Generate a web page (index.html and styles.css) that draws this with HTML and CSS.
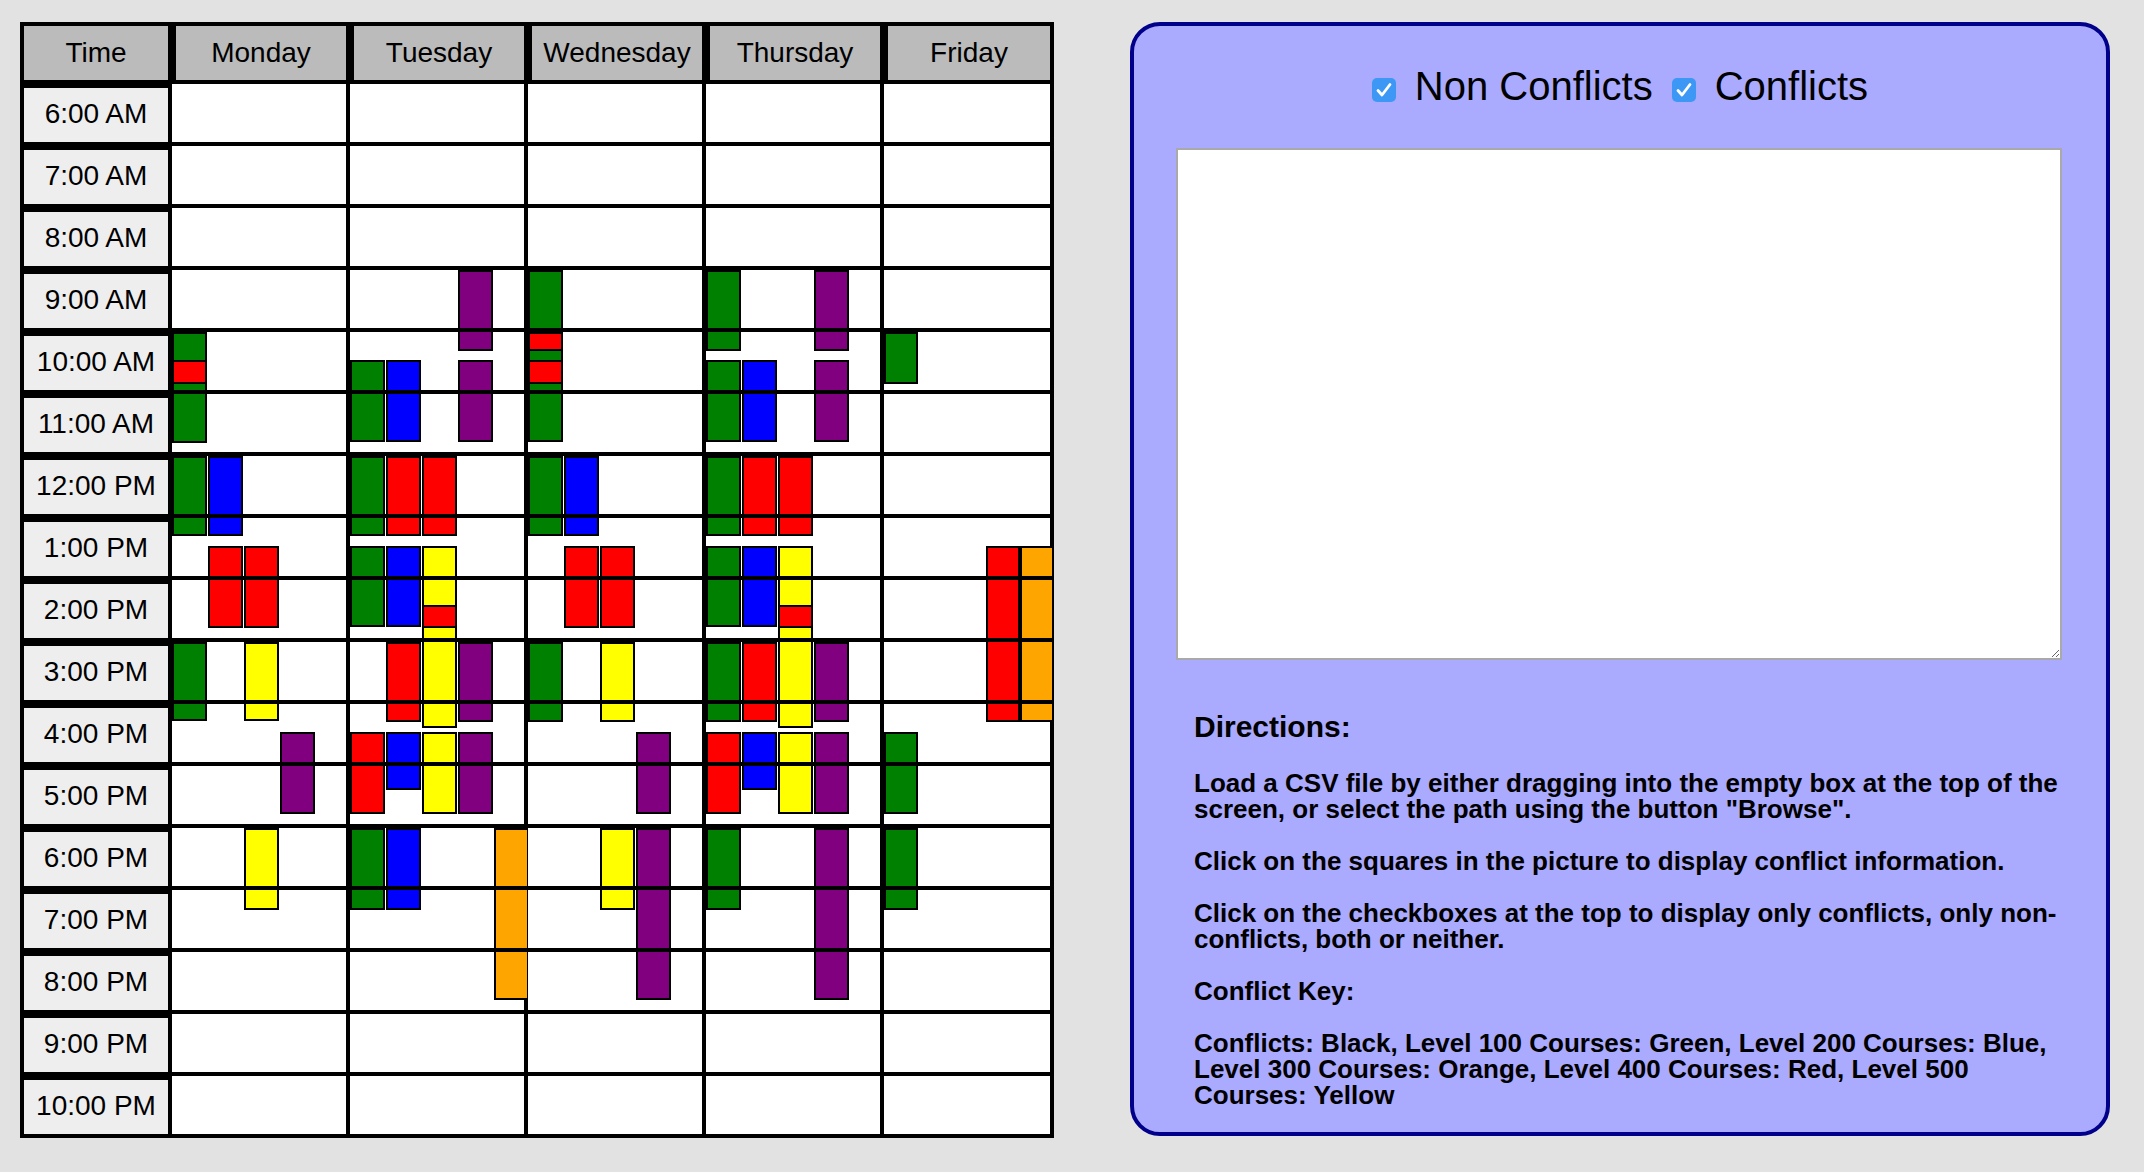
FILE: index.html
```html
<!DOCTYPE html>
<html lang="en">
<head>
<meta charset="utf-8">
<title>Schedule Conflicts</title>
<link rel="stylesheet" href="styles.css">
</head>
<body>
<main class="app">
  <div class="schedule">
    <div class="hd">Time</div>
    <div class="hd hd-day">Monday</div>
    <div class="hd hd-day">Tuesday</div>
    <div class="hd hd-day">Wednesday</div>
    <div class="hd hd-day">Thursday</div>
    <div class="hd hd-day">Friday</div>

    <div class="time">6:00 AM</div><div class="day"></div><div class="day"></div><div class="day"></div><div class="day"></div><div class="day"></div>
    <div class="time">7:00 AM</div><div class="day"></div><div class="day"></div><div class="day"></div><div class="day"></div><div class="day"></div>
    <div class="time">8:00 AM</div><div class="day"></div><div class="day"></div><div class="day"></div><div class="day"></div><div class="day"></div>
    <div class="time">9:00 AM</div><div class="day"></div><div class="day"></div><div class="day"></div><div class="day"></div><div class="day"></div>
    <div class="time">10:00 AM</div><div class="day"></div><div class="day"></div><div class="day"></div><div class="day"></div><div class="day"></div>
    <div class="time">11:00 AM</div><div class="day"></div><div class="day"></div><div class="day"></div><div class="day"></div><div class="day"></div>
    <div class="time">12:00 PM</div><div class="day"></div><div class="day"></div><div class="day"></div><div class="day"></div><div class="day"></div>
    <div class="time">1:00 PM</div><div class="day"></div><div class="day"></div><div class="day"></div><div class="day"></div><div class="day"></div>
    <div class="time">2:00 PM</div><div class="day"></div><div class="day"></div><div class="day"></div><div class="day"></div><div class="day"></div>
    <div class="time">3:00 PM</div><div class="day"></div><div class="day"></div><div class="day"></div><div class="day"></div><div class="day"></div>
    <div class="time">4:00 PM</div><div class="day"></div><div class="day"></div><div class="day"></div><div class="day"></div><div class="day"></div>
    <div class="time">5:00 PM</div><div class="day"></div><div class="day"></div><div class="day"></div><div class="day"></div><div class="day"></div>
    <div class="time">6:00 PM</div><div class="day"></div><div class="day"></div><div class="day"></div><div class="day"></div><div class="day"></div>
    <div class="time">7:00 PM</div><div class="day"></div><div class="day"></div><div class="day"></div><div class="day"></div><div class="day"></div>
    <div class="time">8:00 PM</div><div class="day"></div><div class="day"></div><div class="day"></div><div class="day"></div><div class="day"></div>
    <div class="time">9:00 PM</div><div class="day"></div><div class="day"></div><div class="day"></div><div class="day"></div><div class="day"></div>
    <div class="time">10:00 PM</div><div class="day"></div><div class="day"></div><div class="day"></div><div class="day"></div><div class="day"></div>
  </div>

  <section class="panel">
    <div class="toggles">
      <label class="toggle">
        <span class="check"><svg viewBox="0 0 24 24" width="24" height="24"><path d="M6 12.5 L10 17 L18 6.5" fill="none" stroke="#fff" stroke-width="2.8" stroke-linecap="round" stroke-linejoin="round"/></svg></span>
        <span>Non Conflicts</span>
      </label>
      <label class="toggle">
        <span class="check"><svg viewBox="0 0 24 24" width="24" height="24"><path d="M6 12.5 L10 17 L18 6.5" fill="none" stroke="#fff" stroke-width="2.8" stroke-linecap="round" stroke-linejoin="round"/></svg></span>
        <span>Conflicts</span>
      </label>
    </div>
    <textarea class="drop"></textarea>
    <div class="directions">
      <h3>Directions:</h3>
      <p>Load a CSV file by either dragging into the empty box at the top of the screen, or select the path using the button "Browse".</p>
      <p>Click on the squares in the picture to display conflict information.</p>
      <p>Click on the checkboxes at the top to display only conflicts, only non-conflicts, both or neither.</p>
      <p>Conflict Key:</p>
      <p>Conflicts: Black, Level 100 Courses: Green, Level 200 Courses: Blue, Level 300 Courses: Orange, Level 400 Courses: Red, Level 500 Courses: Yellow</p>
    </div>
  </section>
</main>
<script src="script.js"></script>
</body>
</html>
```

FILE: styles.css
```css
* { box-sizing: border-box; }

body {
  margin: 0;
  background: #e2e2e2;
  font-family: "Liberation Sans", Arial, Helvetica, sans-serif;
  color: #000;
}

.app {
  display: flex;
  align-items: flex-start;
  gap: 76px;
  padding: 22px 0 0 20px;
}

/* ---------- schedule grid ---------- */
.schedule {
  display: grid;
  grid-template-columns: 144px repeat(4, 174px) 166px;
  grid-template-rows: 54px repeat(17, 58px);
  gap: 4px;
  padding: 4px;
  width: 1034px;
  background: #000;
}

.hd {
  background: #bbbbbb;
  font-size: 28px;
  line-height: 53px;
  text-align: center;
  white-space: nowrap;
}

.hd-day { border-left: 4px solid #000; }

.time {
  background: #eeeeee;
  border-top: 4px solid #000;
  font-size: 28px;
  line-height: 52px;
  text-align: center;
  white-space: nowrap;
}

.day {
  position: relative;
  background: #fff;
}

.ev {
  position: absolute;
  border: 2px solid #000;
}
.ev.cont-top { border-top: 0; }
.ev.cont-bot { border-bottom: 0; }

.ev-g { background: #008000; }
.ev-r { background: #ff0000; }
.ev-b { background: #0000ff; }
.ev-y { background: #ffff00; }
.ev-p { background: #800080; }
.ev-o { background: #ffa500; }

/* ---------- side panel ---------- */
.panel {
  width: 980px;
  border: 4px solid #00008b;
  border-radius: 30px;
  background: #aaaaff;
  padding: 37px 0 24px;
}

.toggles {
  display: flex;
  justify-content: center;
  gap: 19px;
  font-size: 40px;
  line-height: 46px;
}

.toggle {
  display: flex;
  align-items: flex-start;
  gap: 19px;
}

.check {
  display: block;
  width: 24px;
  height: 24px;
  margin-top: 15px;
  border-radius: 5px;
  background: #3d98f5;
}
.check svg { display: block; }

.drop {
  display: block;
  width: 886px;
  height: 512px;
  margin: 39px 0 0 42px;
  border: 2px solid #a9a9a9;
  background: #fff;
  resize: both;
}

.directions {
  width: 868px;
  margin: 50px 0 0 60px;
  font-weight: bold;
}

.directions h3 {
  margin: 0;
  font-size: 30px;
  line-height: 34px;
}

.directions p {
  margin: 26px 0 0;
  font-size: 26px;
  line-height: 26px;
}
```

FILE: script.js
```js
(function () {
  var ROW0 = 84, PITCH = 62, CELL = 58;
  // [day, slot, yStart, yEnd, colour]  (y in page pixels of the time axis)
  var blocks = [
    [0,0,332,443,'g'],[0,0,360,384,'r'],[0,0,456,536,'g'],[0,1,456,536,'b'],
    [0,1,546,628,'r'],[0,2,546,628,'r'],[0,0,642,721,'g'],[0,2,642,721,'y'],
    [0,3,732,814,'p'],[0,2,828,910,'y'],

    [1,3,270,351,'p'],[1,0,360,442,'g'],[1,1,360,442,'b'],[1,3,360,442,'p'],
    [1,0,456,536,'g'],[1,1,456,536,'r'],[1,2,456,536,'r'],
    [1,0,546,627,'g'],[1,1,546,627,'b'],[1,2,546,728,'y'],[1,2,605,628,'r'],
    [1,1,642,722,'r'],[1,3,642,722,'p'],
    [1,0,732,814,'r'],[1,1,732,790,'b'],[1,2,732,814,'y'],[1,3,732,814,'p'],
    [1,0,828,910,'g'],[1,1,828,910,'b'],[1,4,828,1000,'o'],

    [2,0,270,442,'g'],[2,0,332,351,'r'],[2,0,360,384,'r'],
    [2,0,456,536,'g'],[2,1,456,536,'b'],[2,1,546,628,'r'],[2,2,546,628,'r'],
    [2,0,642,722,'g'],[2,2,642,722,'y'],[2,3,732,814,'p'],
    [2,2,828,910,'y'],[2,3,828,1000,'p'],

    [3,0,270,351,'g'],[3,3,270,351,'p'],[3,0,360,442,'g'],[3,1,360,442,'b'],[3,3,360,442,'p'],
    [3,0,456,536,'g'],[3,1,456,536,'r'],[3,2,456,536,'r'],
    [3,0,546,627,'g'],[3,1,546,627,'b'],[3,2,546,728,'y'],[3,2,605,628,'r'],
    [3,0,642,722,'g'],[3,1,642,722,'r'],[3,3,642,722,'p'],
    [3,0,732,814,'r'],[3,1,732,790,'b'],[3,2,732,814,'y'],[3,3,732,814,'p'],
    [3,0,828,910,'g'],[3,3,828,1000,'p'],

    [4,0,332,384,'g'],[4,3,546,722,'r'],[4,4,546,722,'o'],
    [4,0,732,814,'g'],[4,0,828,910,'g']
  ];
  var cells = document.querySelectorAll('.day');
  blocks.forEach(function (b) {
    var d = b[0], s = b[1], y0 = b[2], y1 = b[3], c = b[4];
    var step = d === 4 ? 34 : 36, w = d === 4 ? 34 : 35;
    for (var r = 0; r < 17; r++) {
      var T = ROW0 + PITCH * r, B = T + CELL;
      var a = Math.max(y0, T), e = Math.min(y1, B);
      if (e <= a) continue;
      var el = document.createElement('div');
      el.className = 'ev ev-' + c + (y0 < T ? ' cont-top' : '') + (y1 > B ? ' cont-bot' : '');
      el.style.left = (s * step) + 'px';
      el.style.width = w + 'px';
      el.style.top = (a - T) + 'px';
      el.style.height = (e - a) + 'px';
      cells[r * 5 + d].appendChild(el);
    }
  });
})();
```
